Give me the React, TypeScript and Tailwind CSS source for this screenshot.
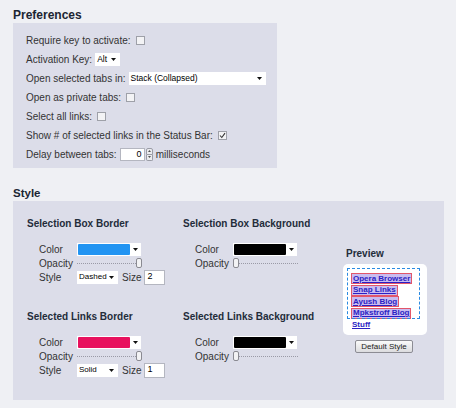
import React from "react";

function Arrow() {
  return (
    <svg width="5" height="3" viewBox="0 0 5 3" className="shrink-0">
      <polygon points="0,0 5,0 2.5,3" fill="#111" />
    </svg>
  );
}

function Checkbox({ checked = false }: { checked?: boolean }) {
  return (
    <span className="ml-[5px] flex h-[9px] w-[9px] items-center justify-center border border-[#9ea0a8] bg-[#f3f3f5]">
      {checked && (
        <svg width="7" height="7" viewBox="0 0 7 7">
          <path d="M1 3.5 L2.8 5.5 L6 1.2" fill="none" stroke="#333" strokeWidth="1.1" />
        </svg>
      )}
    </span>
  );
}

function Select({ value, width, size = "text-[8.5px]" }: { value: string; width: string; size?: string }) {
  return (
    <span className={`flex h-[13px] items-center justify-between bg-white pl-[2px] pr-[4px] text-black ${size} ${width}`}>
      <span>{value}</span>
      <Arrow />
    </span>
  );
}

function ColorSelect({ color }: { color: string }) {
  return (
    <span className="flex h-[13px] w-[64px] items-center justify-between bg-white pl-[1px] pr-[3px]">
      <span className="h-[11px] w-[52px] rounded-[1px]" style={{ backgroundColor: color }} />
      <Arrow />
    </span>
  );
}

function Slider({ full }: { full: boolean }) {
  return (
    <span className="relative flex h-[10px] w-[65px] items-center">
      <span className="w-full border-t border-dotted border-[#9a9aa6]" />
      <span
        className={`absolute top-0 h-[10px] w-[6px] rounded-[2px] border border-[#8a8a92] bg-[#f2f2f4] ${full ? "right-0" : "left-0"}`}
      />
    </span>
  );
}

function Row({ label, children }: { label: string; children: React.ReactNode }) {
  return (
    <div className="flex h-[14px] items-center">
      <span className="w-[38px] shrink-0">{label}</span>
      {children}
    </div>
  );
}

function Section({
  title,
  color,
  full,
  style,
  size,
}: {
  title: string;
  color: string;
  full: boolean;
  style?: string;
  size?: string;
}) {
  return (
    <div className="flex flex-col">
      <div className="h-[14px] text-[10px] font-bold leading-[14px] text-[#232c3a]">{title}</div>
      <div className="mt-[11px] flex flex-col pl-[12px] text-[10px] text-[#333]">
        <Row label="Color">
          <ColorSelect color={color} />
        </Row>
        <Row label="Opacity">
          <Slider full={full} />
        </Row>
        {style && (
          <Row label="Style">
            <Select value={style} width="w-[41px]" size="text-[8px]" />
            <span className="ml-[4px] mr-[3px]">Size</span>
            <span className="flex h-[15px] w-[21px] items-center border border-[#b4b6c0] bg-white pl-[2px] text-[9px] text-black">
              {size}
            </span>
          </Row>
        )}
      </div>
    </div>
  );
}

const links = ["Opera Browser", "Snap Links", "Ayush Blog", "Mpkstroff Blog"];

export default function App() {
  return (
    <div className="h-[408px] w-[456px] bg-[#eff0f4] pl-[13px] pt-[7px] font-['Liberation_Sans',Arial,sans-serif]">
      <h2 className="text-[12px] font-bold leading-[16px] text-[#1b2533]">Preferences</h2>
      <div className="flex h-[145px] w-[264px] flex-col bg-[#dcdde9] pl-[13px] pt-[8px] text-[10px] text-[#333]">
        <div className="flex h-[19px] items-center">
          Require key to activate:
          <Checkbox />
        </div>
        <div className="flex h-[19px] items-center">
          <span className="mr-[3px]">Activation Key:</span>
          <Select value="Alt" width="w-[25px]" />
        </div>
        <div className="flex h-[19px] items-center">
          <span className="mr-[3px]">Open selected tabs in:</span>
          <Select value="Stack (Collapsed)" width="w-[137px]" />
        </div>
        <div className="flex h-[19px] items-center">
          Open as private tabs:
          <Checkbox />
        </div>
        <div className="flex h-[19px] items-center">
          Select all links:
          <Checkbox />
        </div>
        <div className="flex h-[19px] items-center">
          Show # of selected links in the Status Bar:
          <Checkbox checked />
        </div>
        <div className="flex h-[19px] items-center">
          <span className="mr-[3px]">Delay between tabs:</span>
          <span className="flex h-[13px] w-[25px] items-center justify-end border border-[#b4b6c0] bg-white pr-[2px] text-[9px] text-black">
            0
          </span>
          <span className="ml-[1px] flex h-[13px] w-[7px] flex-col">
            <span className="flex h-[6.5px] items-center justify-center rounded-t-[2px] border border-[#9a9ca6] bg-[#ececf0]">
              <svg width="3" height="2" viewBox="0 0 3 2">
                <polygon points="0,2 3,2 1.5,0" fill="#555" />
              </svg>
            </span>
            <span className="flex h-[6.5px] items-center justify-center rounded-b-[2px] border border-t-0 border-[#9a9ca6] bg-[#ececf0]">
              <svg width="3" height="2" viewBox="0 0 3 2">
                <polygon points="0,0 3,0 1.5,2" fill="#555" />
              </svg>
            </span>
          </span>
          <span className="ml-[3px]">milliseconds</span>
        </div>
      </div>

      <h2 className="mt-[17px] text-[11.5px] font-bold leading-[16px] text-[#1b2533]">Style</h2>
      <div className="flex h-[199px] w-[431px] bg-[#dcdde9] pl-[14px] pt-[16px]">
        <div className="flex w-[156px] flex-col gap-[26px]">
          <Section title="Selection Box Border" color="#2294f2" full style="Dashed" size="2" />
          <Section title="Selected Links Border" color="#e8115e" full style="Solid" size="1" />
        </div>
        <div className="flex w-[160px] flex-col gap-[40px]">
          <Section title="Selection Box Background" color="#000000" full={false} />
          <Section title="Selected Links Background" color="#000000" full={false} />
        </div>
        <div className="flex w-[84px] flex-col">
          <div className="mt-[30px] h-[14px] pl-[3px] text-[10px] font-bold leading-[14px] text-[#232c3a]">
            Preview
          </div>
          <div className="relative mt-[3px] flex h-[71px] flex-col gap-[0.5px] rounded-[5px] bg-white pl-[8px] pt-[9px]">
            {links.map((l) => (
              <span
                key={l}
                className="flex h-[11px] w-fit items-center border border-[#e2566a] bg-[#c9bcf0] px-[1px] text-[8px] font-bold text-[#2b1fc4] underline"
              >
                {l}
              </span>
            ))}
            <span className="ml-[1px] mt-[1px] text-[8px] font-bold leading-[9px] text-[#2b1fc4] underline">Stuff</span>
            <span className="absolute left-[4px] top-[4px] h-[51px] w-[73px] border border-dashed border-[#2a8ae2]" />
          </div>
          <button className="ml-[12px] mt-[5px] flex h-[13px] w-[58px] items-center justify-center rounded-[2px] border border-[#8c8c94] bg-gradient-to-b from-[#fafafa] to-[#dcdcdf] text-[8px] text-[#222]">
            Default Style
          </button>
        </div>
      </div>
    </div>
  );
}
